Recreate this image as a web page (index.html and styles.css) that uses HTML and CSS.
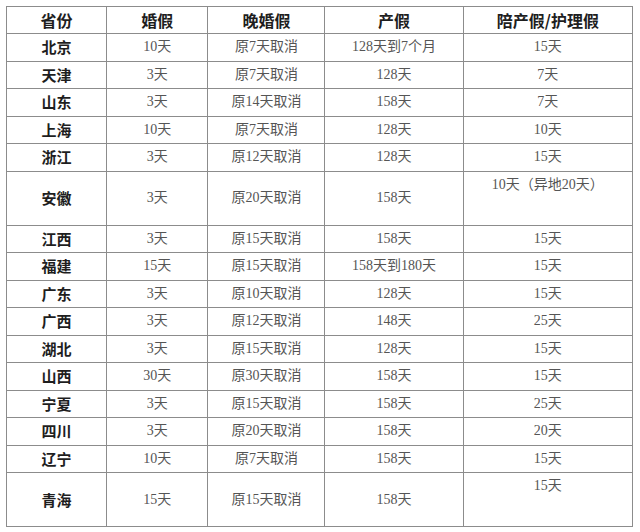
FILE: index.html
```html
<!DOCTYPE html>
<html lang="zh-CN">
<head>
<meta charset="utf-8">
<title>各省婚假产假</title>
<link rel="stylesheet" href="styles.css">
</head>
<body>
<table class="leave">
  <colgroup>
    <col class="c1"><col class="c2"><col class="c3"><col class="c4"><col class="c5">
  </colgroup>
  <thead>
    <tr><th>省份</th><th>婚假</th><th>晚婚假</th><th>产假</th><th>陪产假/护理假</th></tr>
  </thead>
  <tbody>
    <tr><th>北京</th><td>10天</td><td>原7天取消</td><td>128天到7个月</td><td>15天</td></tr>
    <tr><th>天津</th><td>3天</td><td>原7天取消</td><td>128天</td><td>7天</td></tr>
    <tr><th>山东</th><td>3天</td><td>原14天取消</td><td>158天</td><td>7天</td></tr>
    <tr><th>上海</th><td>10天</td><td>原7天取消</td><td>128天</td><td>10天</td></tr>
    <tr><th>浙江</th><td>3天</td><td>原12天取消</td><td>128天</td><td>15天</td></tr>
    <tr class="tall"><th>安徽</th><td>3天</td><td>原20天取消</td><td>158天</td><td class="top">10天（异地20天）</td></tr>
    <tr><th>江西</th><td>3天</td><td>原15天取消</td><td>158天</td><td>15天</td></tr>
    <tr><th>福建</th><td>15天</td><td>原15天取消</td><td>158天到180天</td><td>15天</td></tr>
    <tr><th>广东</th><td>3天</td><td>原10天取消</td><td>128天</td><td>15天</td></tr>
    <tr><th>广西</th><td>3天</td><td>原12天取消</td><td>148天</td><td>25天</td></tr>
    <tr><th>湖北</th><td>3天</td><td>原15天取消</td><td>128天</td><td>15天</td></tr>
    <tr><th>山西</th><td>30天</td><td>原30天取消</td><td>158天</td><td>15天</td></tr>
    <tr><th>宁夏</th><td>3天</td><td>原15天取消</td><td>158天</td><td>25天</td></tr>
    <tr><th>四川</th><td>3天</td><td>原20天取消</td><td>158天</td><td>20天</td></tr>
    <tr><th>辽宁</th><td>10天</td><td>原7天取消</td><td>158天</td><td>15天</td></tr>
    <tr class="tall"><th>青海</th><td>15天</td><td>原15天取消</td><td>158天</td><td class="top">15天</td></tr>
  </tbody>
</table>
</body>
</html>
```

FILE: styles.css
```css
html, body {
  margin: 0;
  padding: 0;
  background: #ffffff;
}

.leave {
  margin: 6px 0 0 6px;
  border-collapse: collapse;
  table-layout: fixed;
  width: 627px;
  font-family: "Liberation Serif", "Noto Sans CJK SC", serif;
}

.c1 { width: 100px; }
.c2 { width: 101px; }
.c3 { width: 117px; }
.c4 { width: 138px; }
.c5 { width: 169px; }

.leave th,
.leave td {
  border: 1px solid #8c8c8c;
  padding: 0;
  text-align: center;
  vertical-align: middle;
  line-height: 16px;
}

.leave thead tr { height: 27px; }
.leave tbody tr { height: 27.5px; }
.leave tbody tr.tall { height: 54px; }

.leave th {
  font-family: "Noto Sans CJK SC", sans-serif;
  font-weight: 700;
  font-size: 15px;
  color: #1e1e1e;
}

.leave thead th {
  font-size: 16px;
}

.leave td {
  font-size: 14px;
  color: #555555;
}

.leave td.top {
  vertical-align: top;
  padding-top: 5px;
}
```
